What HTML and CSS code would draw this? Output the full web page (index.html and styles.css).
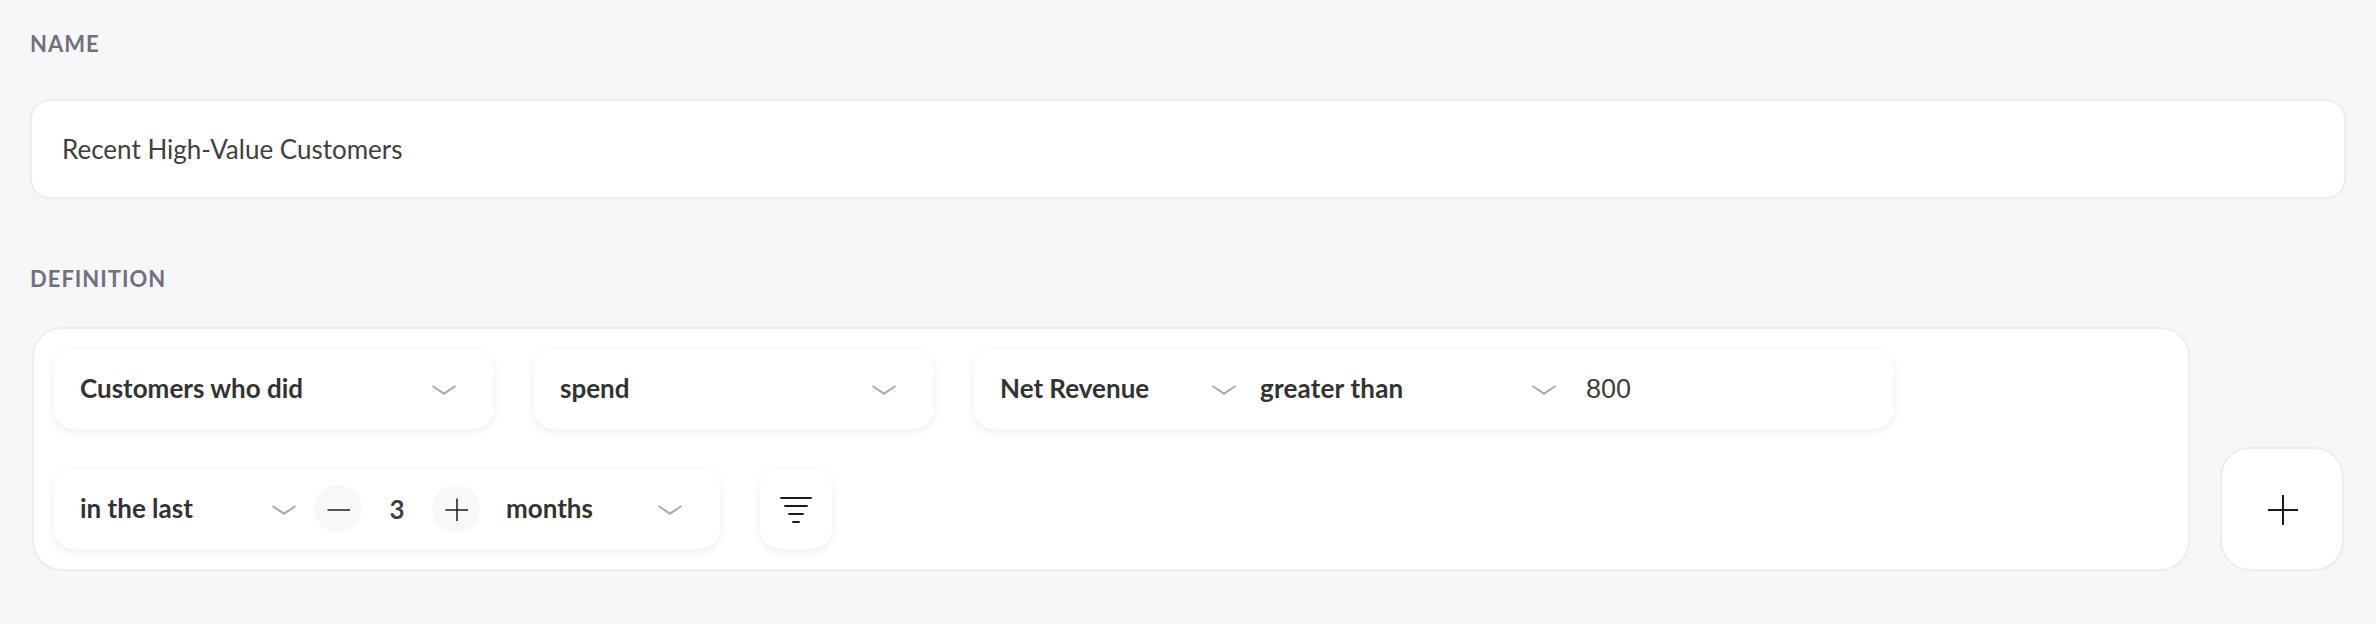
FILE: index.html
```html
<!DOCTYPE html>
<html lang="en">
  <head>
    <meta charset="UTF-8" />
    <title>Segment</title>
    <link rel="stylesheet" href="styles.css">
  </head>
  <body>
    <svg class="sprite">
      <symbol id="chevron" viewBox="0 0 24 12">
        <path d="M.5 2 12 9.7 23.5 2" />
      </symbol>
    </svg>

    <div class="form">
      <label class="label" for="name">Name</label>
      <input class="name-input" id="name" type="text" value="Recent High-Value Customers" />

      <div class="label label-definition">Definition</div>
      <div class="definition">
        <div class="panel">
          <div class="row">
            <div class="chip chip-who">
              <div class="select"><span>Customers who did</span><svg class="chevron"><use href="#chevron" /></svg></div>
            </div>
            <div class="chip chip-action">
              <div class="select"><span>spend</span><svg class="chevron"><use href="#chevron" /></svg></div>
            </div>
            <div class="chip chip-condition">
              <div class="select select-metric"><span>Net Revenue</span><svg class="chevron"><use href="#chevron" /></svg></div>
              <div class="select select-operator"><span>greater than</span><svg class="chevron"><use href="#chevron" /></svg></div>
              <input class="value-input" type="text" value="800" />
            </div>
          </div>
          <div class="row">
            <div class="chip chip-period">
              <div class="select select-range"><span>in the last</span><svg class="chevron"><use href="#chevron" /></svg></div>
              <div class="stepper">
                <button class="step">
                  <svg width="48" height="48" viewBox="0 0 48 48"><path d="M13.5 25h22.5" /></svg>
                </button>
                <span class="count">3</span>
                <button class="step">
                  <svg width="48" height="48" viewBox="0 0 48 48"><path d="M13.5 25h22.5M25 13.5v22.5" /></svg>
                </button>
              </div>
              <div class="select"><span>months</span><svg class="chevron"><use href="#chevron" /></svg></div>
            </div>
            <button class="chip filter">
              <svg width="32" height="28" viewBox="0 0 32 28"><path d="M.3 3h31.4M4.3 11h23.4M8.3 19h15.4M12.3 27h7.4" /></svg>
            </button>
          </div>
        </div>
        <button class="add">
          <svg width="30" height="30" viewBox="0 0 30 30"><path d="M0 15h30M15 0v30" /></svg>
        </button>
      </div>
    </div>
  </body>
</html>
```
FILE: styles.css
```css
* {
  box-sizing: border-box;
}
body {
  margin: 0;
  background: #f7f7f9;
  font-family: Lato, sans-serif;
  font-size: 26px;
  color: #333;
}
button,
input {
  font: inherit;
  color: inherit;
  border: none;
  margin: 0;
  padding: 0;
  outline: none;
}
svg {
  display: block;
  fill: none;
}
.sprite {
  display: none;
}
.form {
  display: flex;
  flex-direction: column;
  padding: 30px;
}
.label {
  height: 28px;
  line-height: 28px;
  font-size: 22px;
  font-weight: 700;
  letter-spacing: 1px;
  text-transform: uppercase;
  color: #72707f;
}
.name-input {
  width: 100%;
  height: 100px;
  margin-top: 41px;
  padding: 0 30px;
  background: #fff;
  border: 2px solid #ededed;
  border-radius: 20px;
  color: #404040;
}
.label-definition {
  margin-top: 66px;
}
.definition {
  display: flex;
  align-items: flex-end;
  gap: 30px;
  margin: 34px 2px 0;
}
.panel {
  flex: 1;
  display: flex;
  flex-direction: column;
  gap: 40px;
  padding: 20px;
  background: #fff;
  border: 2px solid #ededed;
  border-radius: 30px;
}
.row {
  display: flex;
  gap: 40px;
}
.chip {
  display: flex;
  align-items: center;
  height: 80px;
  padding: 0 38px 0 26px;
  background: #fff;
  border-radius: 20px;
  box-shadow: 0 2px 8px rgba(0, 0, 0, 0.08);
}
.chip-who {
  width: 440px;
}
.chip-action {
  width: 400px;
}
.chip-condition {
  width: 920px;
}
.chip-period {
  width: 666px;
}
.select {
  flex: 1;
  display: flex;
  align-items: center;
  justify-content: space-between;
  font-weight: 700;
}
.select span {
  padding-bottom: 2px;
}
.select-metric {
  flex: none;
  width: 236px;
  margin-right: 24px;
}
.select-operator {
  flex: none;
  width: 296px;
  margin-right: 30px;
  letter-spacing: 0.2px;
}
.select-range {
  flex: none;
  width: 216px;
  margin-right: 18px;
}
.chevron {
  width: 24px;
  height: 12px;
  margin-top: 2px;
  stroke: #aaa8b8;
  stroke-width: 2;
}
.value-input {
  flex: 1;
  min-width: 0;
  background: none;
  font-family: "Liberation Sans", Arial, sans-serif;
  font-size: 27px;
  color: #404040;
}
.stepper {
  display: flex;
  align-items: center;
  margin-right: 26px;
}
.step {
  width: 48px;
  height: 48px;
  background: #f8f8f8;
  border-radius: 50%;
  stroke: #1b172b;
  stroke-width: 1.5;
}
.count {
  width: 70px;
  text-align: center;
  font-weight: 700;
  color: #404040;
}
.filter {
  justify-content: center;
  width: 72px;
  padding: 0;
  stroke: #1b172b;
  stroke-width: 2;
}
.filter svg {
  overflow: visible;
}
.add {
  display: flex;
  align-items: center;
  justify-content: center;
  width: 124px;
  height: 124px;
  padding: 2px 0 0 2px;
  background: #fff;
  border: 2px solid #ededed;
  border-radius: 30px;
  stroke: #1b172b;
  stroke-width: 2;
}
```
